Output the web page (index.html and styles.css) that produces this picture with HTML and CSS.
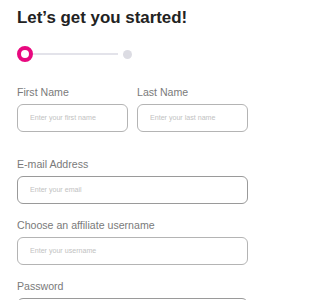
FILE: index.html
```html
<!DOCTYPE html>
<html lang="en">
<head>
<meta charset="utf-8">
<title>Sign up</title>
<link rel="stylesheet" href="styles.css">
</head>
<body>
<main class="page">
  <h1 class="title">Let’s get you started!</h1>
  <div class="progress">
    <span class="step step-active"></span>
    <span class="track"></span>
    <span class="step step-next"></span>
  </div>
  <form class="form">
    <div class="row">
      <div class="field">
        <label class="label">First Name</label>
        <input class="input" type="text" size="4" placeholder="Enter your first name">
      </div>
      <div class="field">
        <label class="label">Last Name</label>
        <input class="input" type="text" size="4" placeholder="Enter your last name">
      </div>
    </div>
    <div class="field">
      <label class="label">E-mail Address</label>
      <input class="input input-strong" type="email" size="4" placeholder="Enter your email">
    </div>
    <div class="field">
      <label class="label">Choose an affiliate username</label>
      <input class="input" type="text" size="4" placeholder="Enter your username">
    </div>
    <div class="field">
      <label class="label">Password</label>
      <input class="input input-strong" type="password" size="4" placeholder="Enter your password">
    </div>
  </form>
</main>
</body>
</html>
```
FILE: styles.css
```css
html, body {
  margin: 0;
  padding: 0;
  background: #ffffff;
}
body {
  font-family: "Liberation Sans", Arial, sans-serif;
  width: 279px;
  height: 300px;
  overflow: hidden;
}
.page {
  box-sizing: border-box;
  width: 279px;
  padding: 8px 31px 0 17px;
}
.title {
  margin: 0;
  font-size: 16.9px;
  line-height: 20px;
  font-weight: 700;
  color: #222222;
  white-space: nowrap;
}
.progress {
  display: flex;
  align-items: center;
  height: 16px;
  margin-top: 18px;
}
.step {
  display: block;
  box-sizing: border-box;
  border-radius: 50%;
  flex: none;
}
.step-active {
  width: 16px;
  height: 16px;
  border: 4px solid #e8097f;
  background: #ffffff;
}
.track {
  display: block;
  width: 85px;
  height: 2px;
  background: #e3e3ea;
  margin-right: 5px;
}
.step-next {
  width: 9px;
  height: 9px;
  background: #dcdce3;
}
.form {
  margin-top: 24px;
}
.row {
  display: grid;
  grid-template-columns: minmax(0, 1fr) minmax(0, 1fr);
  gap: 9px;
  margin-bottom: 26px;
}
.field {
  display: flex;
  flex-direction: column;
  min-width: 0;
  margin-bottom: 15px;
}
.row .field {
  margin-bottom: 0;
}
.label {
  font-size: 10.6px;
  line-height: 13px;
  color: #7a7a7a;
  margin-bottom: 5px;
  white-space: nowrap;
}
.input {
  box-sizing: border-box;
  width: 100%;
  min-width: 0;
  height: 28px;
  margin: 0;
  padding: 0 0 0 12px;
  border: 1px solid #b4b4b4;
  border-radius: 6px;
  background: #ffffff;
  font-family: "Liberation Sans", Arial, sans-serif;
  font-size: 7.1px;
  color: #333333;
  outline: none;
}
.input-strong {
  border-color: #9a9a9a;
}
.input::placeholder {
  color: #c2c2c2;
}
```
